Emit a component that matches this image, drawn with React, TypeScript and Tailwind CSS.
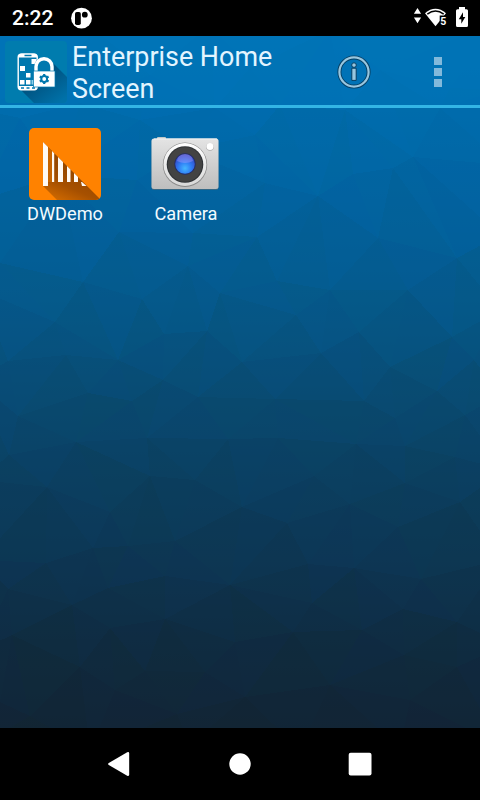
import React from "react";

type Point = [number, number];
type Triangle = [number, number, number];

// Corners of the wallpaper's low-poly mesh
const vertices: Point[] = [
  [-20, 20], [95, 30], [210, 25], [330, 30], [500, 20],
  [-20, 110], [-20, 200], [-20, 290], [-25, 380], [-20, 480], [-20, 560], [-20, 650], [-20, 745],
  [500, 90], [505, 165], [500, 235], [500, 310], [500, 395], [505, 470], [500, 560], [505, 645], [500, 745],
  [90, 750], [190, 745], [300, 750], [400, 748],
  [20, 118], [80, 103], [140, 120], [215, 108], [280, 105], [345, 110], [440, 108],
  [60, 70], [150, 75], [250, 68], [380, 70], [450, 88],
  [137, 180], [255, 135], [265, 183], [353, 174], [413, 157], [318, 196], [393, 168], [60, 175], [185, 150],
  [119, 232], [193, 233], [257, 237], [378, 238], [457, 258], [0, 263], [83, 282], [142, 299], [188, 266], [220, 293], [277, 281], [330, 290], [408, 290],
  [8, 361], [66, 355], [118, 360], [55, 322], [88, 393], [18, 416], [132, 401], [164, 334], [207, 331], [242, 362], [198, 397], [163, 380],
  [296, 315], [321, 353], [359, 332], [390, 367], [364, 401], [275, 399], [147, 438], [76, 442], [9, 455], [228, 439], [278, 438],
  [452, 337], [437, 391], [474, 360], [395, 418], [465, 415], [405, 446], [356, 444], [455, 457], [150, 476], [195, 480], [242, 507],
  [110, 512], [47, 487], [314, 476], [350, 504], [405, 483], [460, 502], [287, 523],
  [46, 563], [93, 548], [128, 546], [175, 541], [8, 589], [72, 605], [12, 635], [110, 628], [80, 667], [165, 576], [108, 588],
  [230, 585], [165, 619], [235, 642], [293, 632], [308, 564], [354, 568], [312, 603], [362, 630], [403, 609], [457, 622],
  [421, 579], [404, 655], [457, 667], [145, 671], [205, 672], [245, 697], [330, 685], [115, 690], [0, 702], [410, 700], [398, 527], [177, 714], [30, 716],
];

// Bowyer-Watson Delaunay triangulation
function triangulate(points: Point[]): Triangle[] {
  const n = points.length;
  const all: Point[] = [...points, [-5000, -3000], [5500, -3000], [240, 8000]];
  let triangles: Triangle[] = [[n, n + 1, n + 2]];
  const encloses = (t: Triangle, p: Point) => {
    const [a, b, c] = t.map((i) => all[i]);
    const d = 2 * (a[0] * (b[1] - c[1]) + b[0] * (c[1] - a[1]) + c[0] * (a[1] - b[1]));
    const sq = (q: Point) => q[0] * q[0] + q[1] * q[1];
    const x = (sq(a) * (b[1] - c[1]) + sq(b) * (c[1] - a[1]) + sq(c) * (a[1] - b[1])) / d;
    const y = (sq(a) * (c[0] - b[0]) + sq(b) * (a[0] - c[0]) + sq(c) * (b[0] - a[0])) / d;
    return (p[0] - x) ** 2 + (p[1] - y) ** 2 < (a[0] - x) ** 2 + (a[1] - y) ** 2;
  };
  for (let i = 0; i < n; i++) {
    const bad = triangles.filter((t) => encloses(t, all[i]));
    const edges = new Map<string, [number, number]>();
    bad.forEach(([a, b, c]) => {
      ([[a, b], [b, c], [c, a]] as [number, number][]).forEach(([u, v]) => {
        const key = u < v ? `${u}-${v}` : `${v}-${u}`;
        if (edges.has(key)) edges.delete(key);
        else edges.set(key, [u, v]);
      });
    });
    triangles = triangles.filter((t) => !bad.includes(t));
    edges.forEach(([u, v]) => triangles.push([u, v, i]));
  }
  return triangles.filter((t) => t.every((v) => v < n));
}

const stops: [number, number[]][] = [
  [36, [0, 115, 182]],
  [110, [0, 108, 173]],
  [200, [2, 99, 159]],
  [300, [5, 89, 139]],
  [400, [9, 74, 113]],
  [480, [11, 63, 96]],
  [560, [13, 54, 83]],
  [640, [15, 44, 66]],
  [728, [18, 37, 53]],
];

function shadeAt(y: number, tint: number): string {
  const v = Math.max(36, Math.min(728, y));
  const k = Math.max(1, stops.findIndex(([s]) => s >= v));
  const [y0, c0] = stops[k - 1];
  const [y1, c1] = stops[k];
  const f = (v - y0) / (y1 - y0);
  const [r, g, b] = c0.map((c, i) => c + (c1[i] - c) * f);
  return `rgb(${Math.round(r)},${Math.round(g + tint * 0.8)},${Math.round(b - tint * 2.5)})`;
}

const facets = triangulate(vertices).map((t, i) => {
  const y = t.reduce((sum, v) => sum + vertices[v][1], 0) / 3;
  const tint = ((i * 37) % 11) / 5 - 1;
  return { points: t.map((v) => vertices[v].join(",")).join(" "), fill: shadeAt(y + tint * 3, tint) };
});

function Wallpaper() {
  return (
    <svg className="absolute inset-0 h-full w-full" viewBox="0 36 480 692" preserveAspectRatio="none" aria-hidden="true">
      <defs>
        <linearGradient id="sky" gradientUnits="userSpaceOnUse" x1="0" y1="36" x2="0" y2="728">
          {stops.map(([y]) => (
            <stop key={y} offset={(y - 36) / 692} stopColor={shadeAt(y, 0)} />
          ))}
        </linearGradient>
      </defs>
      <rect y="36" width="480" height="692" fill="url(#sky)" />
      <g opacity=".66" shapeRendering="crispEdges">
        {facets.map(({ points, fill }, i) => (
          <polygon key={i} points={points} fill={fill} />
        ))}
      </g>
    </svg>
  );
}

function StatusBar() {
  return (
    <div className="flex h-9 shrink-0 items-center bg-black pl-3 pr-[11px] text-white">
      <span className="w-[59px] text-[21px] font-medium leading-9">2:22</span>
      <svg width="22" height="22" viewBox="0 0 22 22">
        <circle cx="10.5" cy="11.2" r="10.4" fill="#fff" />
        <rect x="4" y="5" width="5.800" height="13" rx="1.800" fill="#000" />
        <circle cx="13.800" cy="7.700" r="2.900" fill="#000" />
      </svg>
      <svg className="ml-auto" width="56" height="24" viewBox="413 6 56 24">
        <path d="M417.500 8l3.600 5.700h-7.200zM417.500 23.300l3.600-5.700h-7.200z" fill="#fff" />
        <path d="M425 13.200Q435.500 4.500 446 13.200L435.500 26.200Z" fill="#fff" />
        <path d="M427.300 14.100Q435.500 8.100 443.700 14.100" fill="none" stroke="#000" strokeWidth="1.500" />
        <rect x="439.700" y="15.500" width="9" height="11" fill="#000" />
        <text x="440.300" y="25" fontSize="10.500" fontWeight="700" fill="#fff">5</text>
        <path d="M459 7h6v2.300h1.500q1.500 0 1.500 1.500v14.700q0 1.500-1.500 1.500h-9q-1.500 0-1.500-1.500V10.800q0-1.500 1.500-1.500h1.500z" fill="#fff" />
        <path d="M463 12.300l-4.200 7h2.500v4.500l4-6.800h-2.300z" fill="#000" />
      </svg>
    </div>
  );
}

function LauncherLogo() {
  return (
    <svg className="shrink-0" width="63" height="63" viewBox="0 0 63 63">
      <defs>
        <linearGradient id="longShadow" gradientUnits="userSpaceOnUse" x1="38" y1="36" x2="56" y2="60">
          <stop offset="0" stopColor="#005482" />
          <stop offset="1" stopColor="#0071a8" />
        </linearGradient>
      </defs>
      <rect width="62" height="62" rx="4" fill="#007cae" />
      <path d="M48 22L62 36V58q0 4-4 4H29L14 47 32 45z" fill="url(#longShadow)" />
      <rect x="13.200" y="13.200" width="19" height="35.500" rx="3" fill="#0078ae" stroke="#fff" strokeWidth="1.400" />
      <path d="M13 16.500q0-4 4-4h11.500q4 0 4 4zM13 45h19.500q0 4-4 4H17q-4 0-4-4z" fill="#fff" />
      <path d="M19.500 14.500h7M16 47h3M21.500 47h3M27 47h3" stroke="#0078ae" strokeWidth="1.400" />
      <path d="M26.500 18h5v5h-5zM15 25h5v5h-5zM21 32h4.500v4.500H21zM15 39h4.500v4.500H15zM21 39h4.500v4.500H21z" fill="#fff" />
      <path d="M26.500 39h3v4.500h-3z" fill="#8fd0ea" />
      <path d="M29.200 31v-5.300a9.800 9.800 0 0 1 19.600 0V31" fill="#0078ae" />
      <path d="M31 31v-5.300a8 8 0 0 1 16 0v5.300" fill="none" stroke="#fff" strokeWidth="3.400" />
      <rect x="28.500" y="30" width="21.500" height="16" fill="#fff" stroke="#0078ae" strokeWidth=".7" />
      <g transform="translate(39.200 38)">
        <circle r="2.900" fill="none" stroke="#0078ae" strokeWidth="2" />
        <path d="M0-5.100v2M0 5.100V3.100M-4.400-2.500l1.700 1M4.400 2.500L2.700 1.500M4.400-2.500L2.700-1.500M-4.400 2.500l1.700-1" stroke="#0078ae" strokeWidth="2.200" />
      </g>
    </svg>
  );
}

function ActionBar() {
  return (
    <header className="flex h-[72px] shrink-0 items-start border-b-[3px] border-[#33b5e5] bg-[#0076b9]/50 pl-[5px] pt-[5px]">
      <LauncherLogo />
      <h1 className="w-[260px] pl-1 text-[26.9px] font-normal leading-8 text-[#e3f5ff]">
        Enterprise Home
        <br />
        Screen
      </h1>
      <button className="ml-[7px] mt-[13px]" aria-label="Information">
        <svg width="36" height="36" viewBox="0 0 36 36">
          <circle cx="19" cy="18" r="14.600" fill="none" stroke="#063e62" strokeWidth="4" />
          <circle cx="19" cy="18" r="14.600" fill="none" stroke="#98c6df" strokeWidth="2.200" />
          <path d="M16.800 14.200h4.400v12.200h-4.400z" fill="#98c6df" stroke="#063e62" strokeWidth="1" />
          <circle cx="19" cy="11.100" r="2.300" fill="#98c6df" stroke="#063e62" strokeWidth="1" />
        </svg>
      </button>
      <button className="ml-[63px] mt-4 flex flex-col gap-[3px]" aria-label="More options">
        <span className="size-2 bg-[#82b9db]" />
        <span className="size-2 bg-[#82b9db]" />
        <span className="size-2 bg-[#82b9db]" />
      </button>
    </header>
  );
}

function BarcodeIcon() {
  return (
    <svg width="72" height="72" viewBox="0 0 72 72">
      <defs>
        <linearGradient id="barcodeShade" gradientUnits="userSpaceOnUse" x1="38" y1="42" x2="26" y2="70">
          <stop offset="0" stopColor="#984900" />
          <stop offset=".5" stopColor="#a65000" />
          <stop offset="1" stopColor="#cc6700" />
        </linearGradient>
        <clipPath id="tile"><rect width="72" height="72" rx="5" /></clipPath>
      </defs>
      <g clipPath="url(#tile)">
        <rect width="72" height="72" fill="#ff8200" />
        <path d="M14 14L72 72H28L14 58z" fill="url(#barcodeShade)" />
        <path d="M19 19l4 4v31h-4z" fill="#c66400" />
        <path d="M14 14l5 5v39h-5z" fill="#fffaf4" />
        <path d="M23 23l2.200 2.200V54H23zM29 29l5 5v20h-5zM38 38l3.500 3.500V54H38zM45 45l4 4v5h-4zM52 54h1l4.500 4H53z" fill="#fffaf4" />
      </g>
    </svg>
  );
}

function CameraIcon() {
  return (
    <svg width="72" height="72" viewBox="0 0 72 72">
      <defs>
        <linearGradient id="cameraBody" x1="0" y1="0" x2="0" y2="1">
          <stop offset="0" stopColor="#e4e4e4" /><stop offset=".5" stopColor="#d0d0d0" /><stop offset="1" stopColor="#bebebe" />
        </linearGradient>
        <linearGradient id="lensRing" x1="0" y1="0" x2="0" y2="1">
          <stop offset="0" stopColor="#fff" /><stop offset="1" stopColor="#d8d8d8" />
        </linearGradient>
        <radialGradient id="lens" cx=".5" cy=".72" r=".65">
          <stop offset="0" stopColor="#45b7ff" /><stop offset=".5" stopColor="#2f7df5" /><stop offset="1" stopColor="#3348c4" />
        </radialGradient>
      </defs>
      <path d="M7 10q0-1 1-1h7q1 0 1 1v3H7z" fill="#c1c8c9" />
      <rect x="1.500" y="11" width="67" height="51" rx="2.500" fill="#516c79" fillOpacity=".65" />
      <rect x="1.500" y="10.500" width="67" height="50.500" rx="2.500" fill="url(#cameraBody)" />
      <path d="M4 11h63" stroke="#f2f2f2" strokeWidth="1" />
      <circle cx="35" cy="36.800" r="22.200" fill="#888" />
      <circle cx="35" cy="36.500" r="21.500" fill="url(#lensRing)" />
      <circle cx="35" cy="36.500" r="18.300" fill="#303336" />
      <circle cx="35" cy="36.500" r="17.200" fill="#434343" />
      <circle cx="35" cy="36" r="10.700" fill="#242d67" />
      <circle cx="35" cy="36" r="9.800" fill="url(#lens)" />
      <path d="M27 33a8 7 0 0 1 16 0q-8 4-16 0z" fill="#b0a3ff" fillOpacity=".4" />
      <circle cx="60" cy="19" r="3.800" fill="#aaa" />
      <circle cx="60" cy="18.500" r="3.500" fill="#fff" />
    </svg>
  );
}

function AppShortcut({ label, children }: { label: string; children: React.ReactNode }) {
  return (
    <button className="flex flex-col items-center text-[18.2px] leading-[21px] text-[#f2fbff]">
      {children}
      <span className="mt-[3px]">{label}</span>
    </button>
  );
}

export default function App() {
  return (
    <div className="flex h-[800px] w-[480px] flex-col overflow-hidden bg-black font-['Roboto',sans-serif]">
      <StatusBar />
      <main className="relative flex flex-1 flex-col">
        <Wallpaper />
        <div className="relative flex flex-1 flex-col">
          <ActionBar />
          <section className="grid grid-cols-[120px_120px] gap-x-px pl-[5px] pt-5">
            <AppShortcut label="DWDemo"><BarcodeIcon /></AppShortcut>
            <AppShortcut label="Camera"><CameraIcon /></AppShortcut>
          </section>
        </div>
      </main>
      <nav className="flex h-[72px] shrink-0 items-center justify-center gap-24 bg-black">
        <button aria-label="Back">
          <svg width="24" height="24" viewBox="0 0 24 24"><path d="M.800 11L19.200.300q2-.800 2 1.200v21q0 2-2 1.200L.800 13q-1.500-1 0-2z" fill="#fff" /></svg>
        </button>
        <button aria-label="Home">
          <svg width="24" height="24" viewBox="0 0 24 24"><circle cx="12" cy="12" r="10.700" fill="#fff" /></svg>
        </button>
        <button aria-label="Recent apps">
          <svg width="24" height="24" viewBox="0 0 24 24"><rect x=".700" y=".700" width="22.800" height="22.800" rx="2" fill="#fff" /></svg>
        </button>
      </nav>
    </div>
  );
}
